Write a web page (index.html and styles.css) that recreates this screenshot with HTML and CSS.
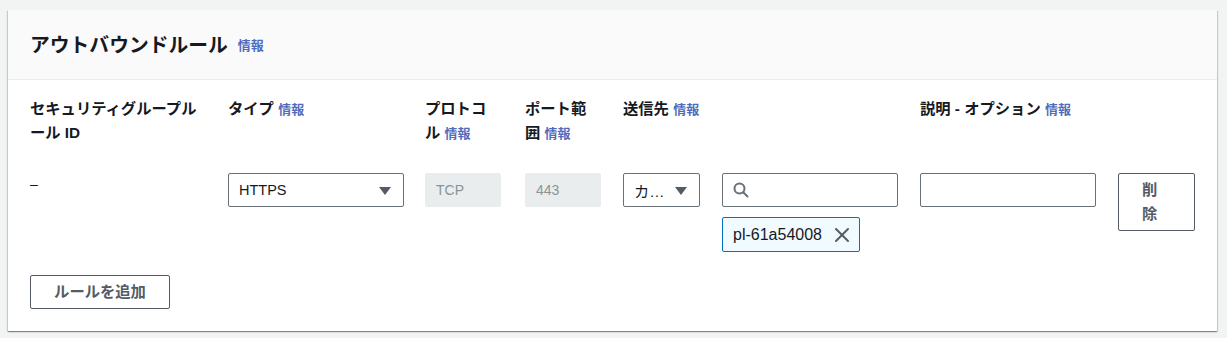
FILE: index.html
```html
<!DOCTYPE html>
<html lang="ja">
<head>
  <meta charset="UTF-8" />
  <title>アウトバウンドルール</title>
  <link rel="stylesheet" href="styles.css">
</head>
<body>
  <div class="card">
    <div class="card-header">
      <h2>アウトバウンドルール</h2>
      <a class="info" href="#">情報</a>
    </div>

    <div class="card-body">
      <div class="rules">
        <div class="label col-id">セキュリティグループル<br>ール ID</div>
        <div class="label">タイプ <a class="info" href="#">情報</a></div>
        <div class="label">プロトコ<br>ル <a class="info" href="#">情報</a></div>
        <div class="label">ポート範<br>囲 <a class="info" href="#">情報</a></div>
        <div class="label">送信先 <a class="info" href="#">情報</a></div>
        <div class="label"></div>
        <div class="label">説明 - オプション <a class="info" href="#">情報</a></div>
        <div class="label"></div>

        <div class="cell dash">–</div>
        <div class="cell">
          <div class="select wide">
            <span class="select-text">HTTPS</span>
            <svg class="caret" width="12" height="8" viewBox="0 0 12 8"><polygon points="0,0 12,0 6,8" fill="#545b64"/></svg>
          </div>
        </div>
        <div class="cell"><div class="field disabled narrow">TCP</div></div>
        <div class="cell"><div class="field disabled narrow">443</div></div>
        <div class="cell">
          <div class="select dest">
            <span class="select-text">カ…</span>
            <svg class="caret" width="12" height="8" viewBox="0 0 12 8"><polygon points="0,0 12,0 6,8" fill="#545b64"/></svg>
          </div>
        </div>
        <div class="cell stack">
          <div class="field search wide">
            <svg width="16" height="16" viewBox="0 0 16 16" fill="none" stroke="#687078" stroke-width="2" stroke-linecap="round">
              <circle cx="6.5" cy="6.5" r="5"/>
              <line x1="10.5" y1="10.5" x2="14.5" y2="14.5"/>
            </svg>
          </div>
          <div class="token">
            <span>pl-61a54008</span>
            <svg width="16" height="16" viewBox="0 0 16 16" stroke="#545b64" stroke-width="2" stroke-linecap="round">
              <line x1="2" y1="2" x2="14" y2="14"/>
              <line x1="14" y1="2" x2="2" y2="14"/>
            </svg>
          </div>
        </div>
        <div class="cell"><div class="field wide"></div></div>
        <div class="cell"><button class="btn btn-remove">削除</button></div>
      </div>

      <button class="btn btn-add">ルールを追加</button>
    </div>
  </div>
</body>
</html>
```

FILE: styles.css
```css
body {
  margin: 0;
  padding: 10px 10px 6px 8px;
  background: #f2f3f3;
  font-family: 'Liberation Sans', 'Noto Sans CJK JP', sans-serif;
  font-size: 14px;
  color: #16191f;
}
.card {
  background: #fff;
  box-shadow: 0 1px 1px 0 rgba(0, 28, 36, 0.3), 1px 1px 1px 0 rgba(0, 28, 36, 0.15), -1px 1px 1px 0 rgba(0, 28, 36, 0.15);
}
.card-header {
  height: 70px;
  box-sizing: border-box;
  background: #fafafa;
  border-bottom: 1px solid #eaeded;
  padding: 0 22px;
  display: flex;
  align-items: center;
  gap: 10px;
}
h2 {
  margin: 0;
  font-size: 19.8px;
  font-weight: bold;
  line-height: 24px;
}
.info {
  color: #4f6bbd;
  font-size: 13px;
  font-weight: bold;
  text-decoration: none;
}
.card-body {
  padding: 17px 22px 22px;
}
.rules {
  display: grid;
  grid-template-columns: 198px 197px 100px 98px 99px 198px 198px 77px;
  row-gap: 27px;
}
.label {
  font-size: 15.3px;
  font-weight: bold;
  line-height: 24px;
  white-space: nowrap;
}
.cell {
  display: flex;
  align-items: flex-start;
}
.dash {
  line-height: 22px;
}
.stack {
  flex-direction: column;
  gap: 10px;
}
.select, .field {
  height: 34px;
  box-sizing: border-box;
  border: 1px solid #687078;
  border-radius: 2px;
  display: flex;
  align-items: center;
  background: #fff;
}
.select {
  padding: 0 12px 0 10px;
  justify-content: space-between;
}
.select-text {
  font-size: 14.5px;
}
.wide {
  width: 176px;
}
.narrow {
  width: 76px;
}
.dest {
  width: 77px;
}
.dest .select-text {
  font-size: 15.3px;
}
.caret {
  margin-top: 1px;
}
.disabled {
  background: #eaeded;
  border-color: #eaeded;
  color: #879596;
  padding: 0 10px;
}
.search {
  padding: 0 10px;
}
.token {
  height: 35px;
  box-sizing: border-box;
  border: 1px solid #0073bb;
  border-radius: 2px;
  background: #f1faff;
  display: flex;
  align-items: center;
  gap: 12px;
  padding: 0 9px 0 10px;
  font-size: 16px;
}
.btn {
  font-family: inherit;
  font-size: 15.3px;
  font-weight: bold;
  line-height: 24px;
  color: #545b64;
  background: #fff;
  border: 1px solid #545b64;
  border-radius: 2px;
  padding: 4px 22px;
  cursor: pointer;
}
.btn-remove {
  width: 77px;
  text-align: left;
  padding: 4px 26px 4px 23px;
}
.btn-add {
  display: block;
  margin-top: 23px;
  width: 140px;
}
```
